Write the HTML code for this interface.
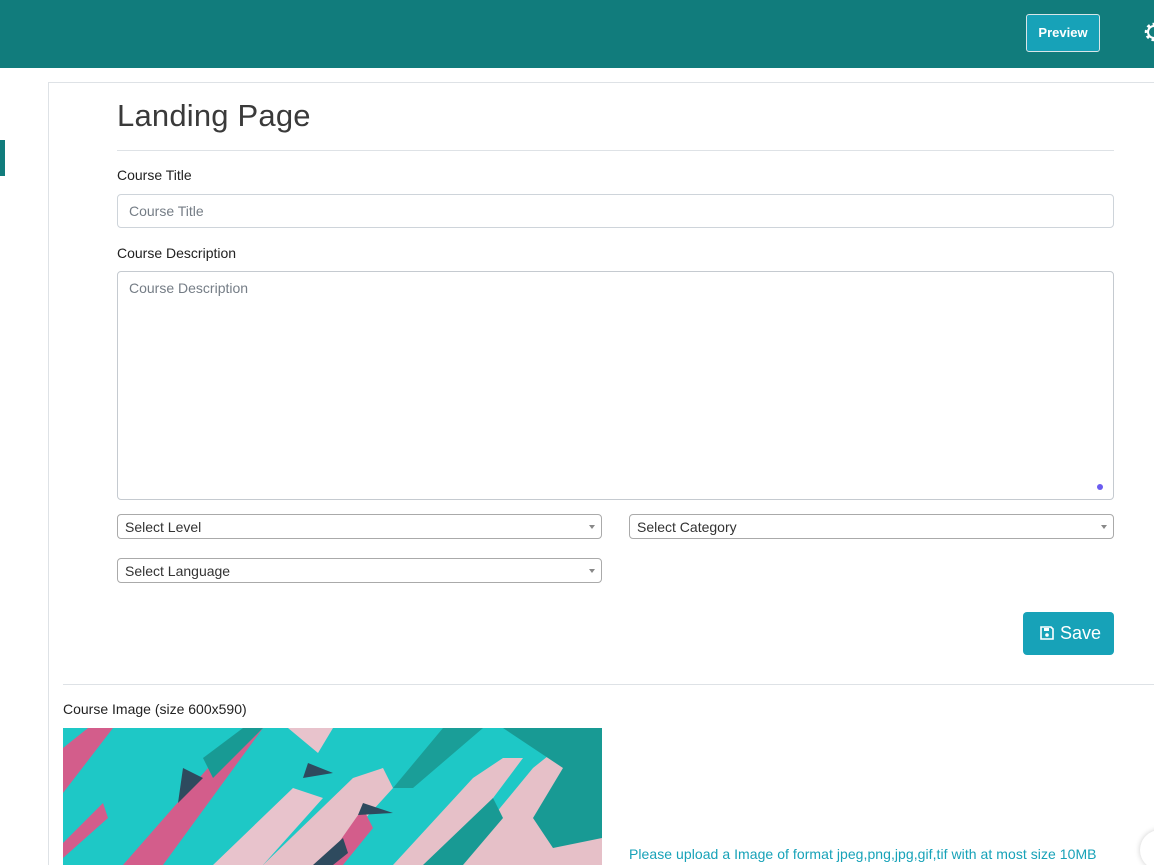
<!DOCTYPE html>
<html style="overflow:hidden;height:865px"><head><meta charset="utf-8"><style>
*{box-sizing:border-box;margin:0;padding:0}
body{width:1154px;height:865px;overflow:hidden;background:#fff;font-family:"Liberation Sans",sans-serif;position:relative;color:#212529}
.top{position:absolute;left:0;top:0;width:1154px;height:68px;background:#117c7c}
.prev{position:absolute;left:1026px;top:14px;width:74px;height:38px;border:1px solid #d8e6e8;border-radius:3px;background:#17a2b8;color:#fff;font-size:13px;font-weight:bold;text-align:center;line-height:35px}
.side{position:absolute;left:0;top:140px;width:5px;height:36px;background:#117c7c}
.card{position:absolute;left:48px;top:82px;width:1120px;height:790px;border:1px solid #dee2e6}
.abs{position:absolute}
h1{position:absolute;left:117px;top:98px;font-size:31px;font-weight:normal;color:#3a3a3a;letter-spacing:.2px}
.hr{position:absolute;height:1px;background:#dee2e6}
.lbl{position:absolute;font-size:14px;color:#222}
.inp{position:absolute;border:1px solid #ced4da;border-radius:4px;font-size:14px;color:#757d86;padding-left:11px}
.sel{position:absolute;border:1px solid #aaa;border-radius:4px;font-size:14px;color:#333;padding-left:7px;height:25px;line-height:24px}
.sel:after{content:"";position:absolute;right:6px;top:10px;border:3.5px solid transparent;border-top:4px solid #888}
.save{position:absolute;left:1023px;top:612px;width:91px;height:43px;background:#17a2b8;border-radius:4px;color:#fff;font-size:18px;line-height:42px;padding-left:37px}
</style></head><body>
<div class="top"><div class="prev">Preview</div>
<svg class="abs" style="left:1143px;top:21px" width="14" height="22" viewBox="0 0 14 22"><circle cx="11" cy="11" r="6" fill="none" stroke="#fff" stroke-width="2"/><circle cx="11" cy="11" r="8" fill="none" stroke="#fff" stroke-width="2.5" stroke-dasharray="3 3"/></svg></div>
<div class="side"></div>
<div class="card"></div>
<h1>Landing Page</h1>
<div class="hr" style="left:117px;top:150px;width:997px"></div>
<div class="lbl" style="left:117px;top:167px">Course Title</div>
<div class="inp" style="left:117px;top:194px;width:997px;height:34px;line-height:33px">Course Title</div>
<div class="lbl" style="left:117px;top:245px">Course Description</div>
<div class="inp" style="left:117px;top:271px;width:997px;height:229px;padding-top:8px;border-color:#c5cad0">Course Description</div>
<div class="abs" style="left:1097px;top:484px;width:6px;height:6px;border-radius:50%;background:#6b5cf0"></div>
<div class="sel" style="left:117px;top:514px;width:485px">Select Level</div>
<div class="sel" style="left:629px;top:514px;width:485px">Select Category</div>
<div class="sel" style="left:117px;top:558px;width:485px">Select Language</div>
<div class="save"><svg class="abs" style="left:17px;top:14px" width="14" height="14" viewBox="0 0 14 14"><path d="M1 1h10l2 2v10H1z" fill="none" stroke="#fff" stroke-width="1.6"/><rect x="4" y="2" width="5" height="3" fill="#fff"/><circle cx="7" cy="9" r="1.8" fill="#fff"/></svg>Save</div>
<div class="hr" style="left:63px;top:684px;width:1091px"></div>
<div class="lbl" style="left:63px;top:701px">Course Image (size 600x590)</div>
<svg class="abs" style="left:63px;top:728px" width="539" height="137" viewBox="0 0 539 137">
<rect width="539" height="137" fill="#1ec8c6"/>
<polygon points="0,20 25,0 50,0 0,65" fill="#d35d8b"/>
<polygon points="60,137 180,0 200,0 100,137" fill="#d35d8b"/>
<polygon points="0,115 40,75 45,90 0,130" fill="#d35d8b"/>
<polygon points="150,137 230,60 260,70 200,137" fill="#e8c3cc"/>
<polygon points="225,0 270,0 255,25" fill="#e8c3cc"/>
<polygon points="200,137 290,50 320,40 330,60 260,137" fill="#e6c0c8"/>
<polygon points="330,137 410,50 440,30 460,30 380,137" fill="#e6c0c8"/>
<polygon points="380,0 420,0 350,60 330,60" fill="#1a9e98"/>
<polygon points="390,137 470,40 520,0 539,0 539,137" fill="#e6c0c8"/>
<polygon points="440,0 539,0 539,110 490,120 470,90 500,40" fill="#189a94"/>
<polygon points="260,137 300,80 310,100 280,137" fill="#d35d8b"/>
<polygon points="120,40 140,50 115,75" fill="#2e4a5e"/>
<polygon points="245,35 270,45 240,50" fill="#2e4a5e"/>
<polygon points="300,75 330,85 295,87" fill="#2e4a5e"/>
<polygon points="140,30 180,0 200,0 150,50" fill="#189a94"/>
<polygon points="360,137 430,70 440,90 400,137" fill="#189a94"/>
<polygon points="250,137 280,110 285,125 270,137" fill="#2e4a5e"/>
</svg>
<div class="abs" style="left:629px;top:846px;font-size:14px;color:#17a2b8;letter-spacing:.05px">Please upload a Image of format jpeg,png,jpg,gif,tif with at most size 10MB</div>
<div class="abs" style="left:1140px;top:830px;width:40px;height:40px;border-radius:50%;background:#fff;box-shadow:0 0 6px rgba(0,0,0,.2)"></div>
</body></html>
